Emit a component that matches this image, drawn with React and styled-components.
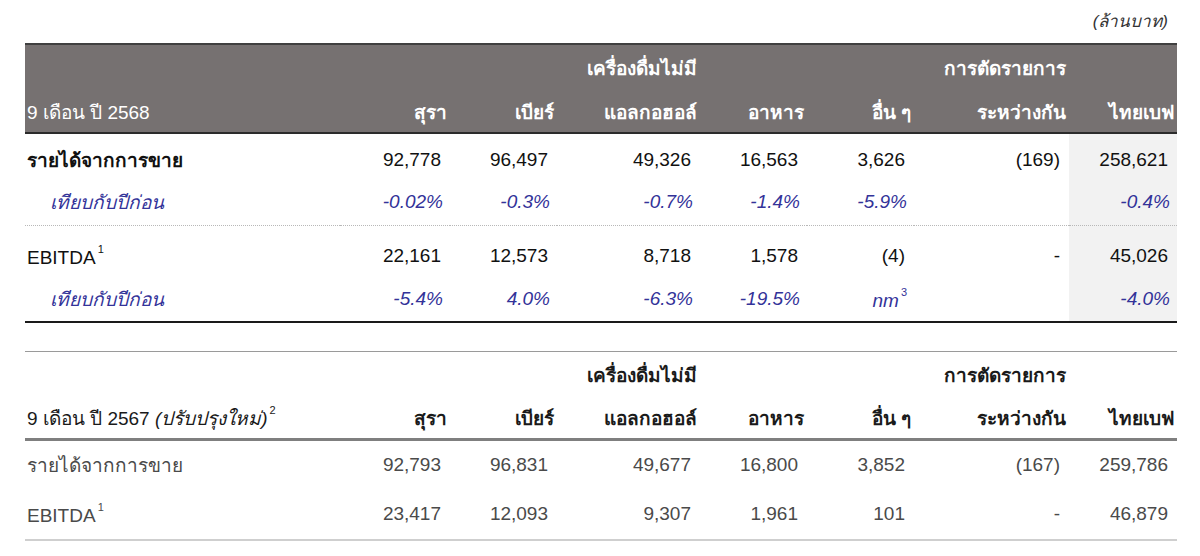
import React from "react";
import styled, { createGlobalStyle } from "styled-components";

const GlobalStyle = createGlobalStyle`
  html, body {
    margin: 0;
    padding: 0;
    background: #ffffff;
  }
  body {
    font-family: "Liberation Sans", Arial, sans-serif;
  }
`;

const Page = styled.div`
  width: 1152px;
  padding: 10px 0 0 25px;
`;

const Unit = styled.div`
  text-align: right;
  font-style: italic;
  font-size: 17px;
  color: #333;
  padding-right: 9px;
  height: 33px;
  line-height: 24px;
`;

const Table = styled.table`
  width: 1152px;
  table-layout: fixed;
  border-collapse: collapse;
  font-size: 19px;
  margin-bottom: ${(p) => p.$gap || 0}px;
  border-top: ${(p) => (p.$dark ? "2px solid #404040" : "1px solid #9a9a9a")};
  border-bottom: ${(p) => (p.$dark ? "2px solid #1a1a1a" : "2px solid #cfcfcf")};
`;

const Head = styled.thead`
  background: ${(p) => (p.$dark ? "#767171" : "transparent")};
  color: ${(p) => (p.$dark ? "#ffffff" : "#1a1a1a")};
  border-bottom: ${(p) => (p.$dark ? "2px solid #2b2b2b" : "3px solid #7f7f7f")};
`;

const HeadRow = styled.tr`
  height: ${(p) => p.$h}px;
`;

const HeadCell = styled.th`
  text-align: ${(p) => (p.$left ? "left" : "right")};
  font-weight: ${(p) => (p.$left ? 400 : 700)};
  padding: 0 ${(p) => (p.$left ? 0 : 3)}px 0 ${(p) => (p.$left ? 2 : 0)}px;
  vertical-align: middle;
  white-space: nowrap;
`;

const Row = styled.tr`
  height: ${(p) => p.$h}px;
  border-top: ${(p) => (p.$dotted ? "1px dotted #b8b8b8" : "none")};

  & > td {
    padding-top: ${(p) => p.$pt || 0}px;
  }
`;

const Label = styled.td`
  text-align: left;
  padding-left: ${(p) => (p.$indent ? 25 : 2)}px;
  font-weight: ${(p) => (p.$bold ? 700 : 400)};
  font-style: ${(p) => (p.$pct ? "italic" : "normal")};
  color: ${(p) => (p.$pct ? "#333399" : p.$muted ? "#4a4a4a" : "#111")};
  white-space: nowrap;
`;

const Cell = styled.td`
  text-align: right;
  padding-right: ${(p) => (p.$pct ? 7 : 9)}px;
  font-style: ${(p) => (p.$pct ? "italic" : "normal")};
  color: ${(p) => (p.$pct ? "#333399" : p.$muted ? "#4a4a4a" : "#111")};
  background: ${(p) => (p.$shade ? "#f2f2f2" : "transparent")};
  white-space: nowrap;
`;

const Sup = styled.sup`
  font-size: 11px;
  font-style: normal;
  vertical-align: 11px;
  margin-left: 2px;
`;

const Note = styled.span`
  font-style: italic;
  font-weight: 400;
`;

const widths = [315, 110, 107, 143, 107, 107, 155, 108];

const Cols = () => (
  <colgroup>
    {widths.map((w, i) => (
      <col key={i} style={{ width: w }} />
    ))}
  </colgroup>
);

const heads = ["สุรา", "เบียร์", "แอลกอฮอล์", "อาหาร", "อื่น ๆ", "ระหว่างกัน", "ไทยเบฟ"];

const Header = ({ dark, title, rows }) => (
  <Head $dark={dark}>
    <HeadRow $h={rows[0]}>
      <HeadCell $left />
      <HeadCell />
      <HeadCell />
      <HeadCell>เครื่องดื่มไม่มี</HeadCell>
      <HeadCell />
      <HeadCell />
      <HeadCell>การตัดรายการ</HeadCell>
      <HeadCell />
    </HeadRow>
    <HeadRow $h={rows[1]}>
      <HeadCell $left>{title}</HeadCell>
      {heads.map((h) => (
        <HeadCell key={h}>{h}</HeadCell>
      ))}
    </HeadRow>
  </Head>
);

const current = [
  {
    label: "รายได้จากการขาย",
    bold: true,
    h: 48,
    pt: 6,
    values: ["92,778", "96,497", "49,326", "16,563", "3,626", "(169)", "258,621"],
    pct: ["-0.02%", "-0.3%", "-0.7%", "-1.4%", "-5.9%", "", "-0.4%"],
  },
  {
    label: "EBITDA",
    sup: "1",
    h: 53,
    pt: 10,
    values: ["22,161", "12,573", "8,718", "1,578", "(4)", "-", "45,026"],
    pct: ["-5.4%", "4.0%", "-6.3%", "-19.5%", "nm", "", "-4.0%"],
  },
];

const previous = [
  {
    label: "รายได้จากการขาย",
    values: ["92,793", "96,831", "49,677", "16,800", "3,852", "(167)", "259,786"],
  },
  {
    label: "EBITDA",
    sup: "1",
    values: ["23,417", "12,093", "9,307", "1,961", "101", "-", "46,879"],
  },
];

const App = () => {
  return (
    <>
      <GlobalStyle />
      <Page>
        <Unit>(ล้านบาท)</Unit>

        <Table $dark $gap={28}>
          <Cols />
          <Header dark title="9 เดือน ปี 2568" rows={[47, 42]} />
          <tbody>
            {current.map((r, gi) => (
              <React.Fragment key={r.label}>
                <Row $h={r.h} $pt={r.pt} $dotted={gi > 0}>
                  <Label $bold={r.bold}>
                    {r.label}
                    {r.sup && <Sup>{r.sup}</Sup>}
                  </Label>
                  {r.values.map((v, i) => (
                    <Cell key={i} $shade={i === 6}>
                      {v}
                    </Cell>
                  ))}
                </Row>
                <Row $h={44}>
                  <Label $pct $indent>
                    เทียบกับปีก่อน
                  </Label>
                  {r.pct.map((v, i) => (
                    <Cell key={i} $pct $shade={i === 6}>
                      {v}
                      {v === "nm" && <Sup>3</Sup>}
                    </Cell>
                  ))}
                </Row>
              </React.Fragment>
            ))}
          </tbody>
        </Table>

        <Table>
          <Cols />
          <Header
            title={
              <>
                9 เดือน ปี 2567 <Note>(ปรับปรุงใหม่)</Note>
                <Sup>2</Sup>
              </>
            }
            rows={[46, 42]}
          />
          <tbody>
            {previous.map((r) => (
              <Row key={r.label} $h={50}>
                <Label $muted>
                  {r.label}
                  {r.sup && <Sup>{r.sup}</Sup>}
                </Label>
                {r.values.map((v, i) => (
                  <Cell key={i} $muted>
                    {v}
                  </Cell>
                ))}
              </Row>
            ))}
          </tbody>
        </Table>
      </Page>
    </>
  );
};

export default App;
